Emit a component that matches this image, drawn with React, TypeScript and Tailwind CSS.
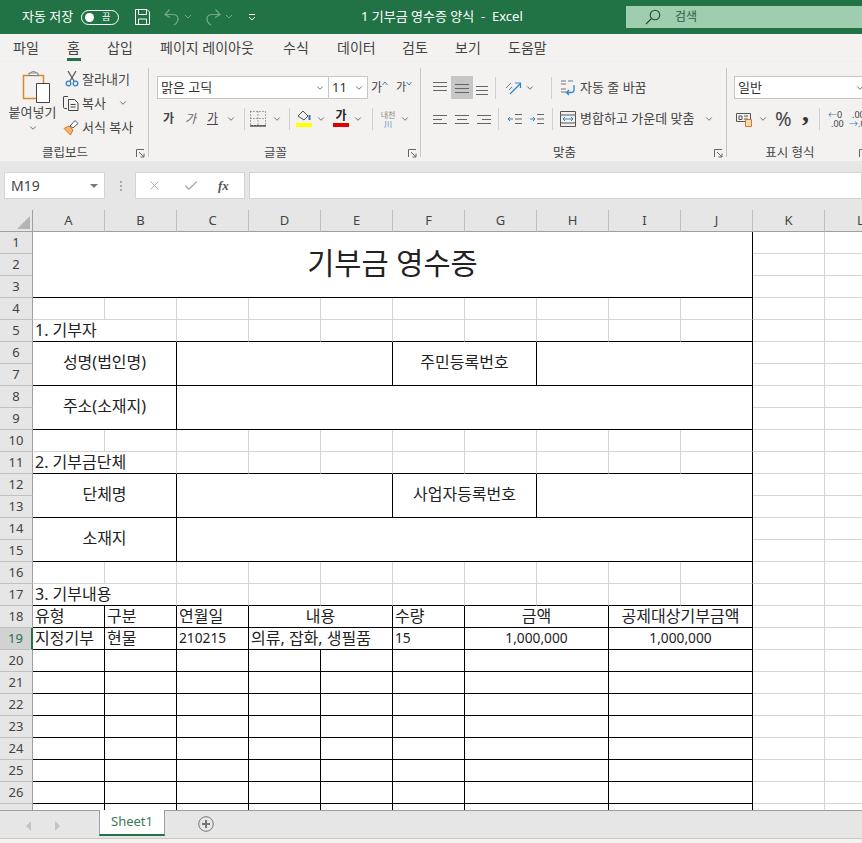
import { Check, ChevronDown, X } from "lucide-react";

type Cell = { span?: number; rows?: number; text?: string; mid?: boolean; r?: boolean; b?: boolean; big?: boolean; num?: boolean };

const font = { fontFamily: '"Noto Sans", "Noto Sans CJK KR", sans-serif' };

const Chev = ({ className = "" }: { className?: string }) => (
  <ChevronDown className={`h-[10px] w-[10px] shrink-0 text-[#555] ${className}`} strokeWidth={2} />
);

const Sep = ({ className = "" }: { className?: string }) => <div className={`h-[22px] w-px shrink-0 bg-[#d2d0ce] ${className}`} />;

const Launcher = () => (
  <svg width="9" height="9" viewBox="0 0 9 9" className="shrink-0 text-[#666]" fill="none" stroke="currentColor">
    <path d="M.5 8V.5H8M3 3l5 5M8 4.5V8H4.5" />
  </svg>
);

// three horizontal strokes used by all the alignment buttons
const Lines = ({ rows, ys = [3, 7, 11] }: { rows: [number, number][]; ys?: number[] }) => (
  <svg width="16" height="14" viewBox="0 0 16 14" className="shrink-0" stroke="#666" fill="none">
    {rows.map((r, i) => (
      <path key={i} d={`M${r[0]} ${ys[i] + 0.5}H${r[1]}`} />
    ))}
  </svg>
);

const Group = ({ w, label, children }: { w: string; label: string; children: React.ReactNode }) => (
  <div className={`flex h-full shrink-0 flex-col border-r border-[#c8c6c4] ${w}`}>
    <div className="flex-1">{children}</div>
    <div className="-mb-[3px] flex h-[14px] items-center pr-[3px] text-[12.5px] leading-none text-[#444]">
      <div className="flex-1 pr-[6px] text-center">{label}</div>
      <Launcher />
    </div>
  </div>
);

const Combo = ({ w, text }: { w: string; text: string }) => (
  <div className={`flex h-[23px] shrink-0 items-center border border-[#c8c6c4] bg-white pl-[3px] text-[13px] text-[#333] ${w}`}>
    {text}
    <Chev className="ml-auto mr-[3px]" />
  </div>
);

const TitleBar = () => (
  <div className="flex h-[34px] shrink-0 items-center bg-[#217346] text-white">
    <span className="ml-[22px] w-[59px] text-[13px]">자동 저장</span>
    <div className="flex h-[15px] w-[38px] items-center rounded-full border border-white pl-[3px] text-[9px]">
      <div className="h-[9px] w-[9px] rounded-full bg-white" />
      <span className="ml-[8px]">끔</span>
    </div>
    <svg width="17" height="18" viewBox="0 0 17 18" fill="none" stroke="white" className="ml-[15px]">
      <path d="M1.5 1.5h11.5l2.5 2.5v12.5h-14zM4.5 1.5v5h8v-5M4.5 16.5v-5.5h8v5.5" />
    </svg>
    <svg width="16" height="18" viewBox="0 0 16 18" fill="none" stroke="#74a88b" strokeWidth="1.2" className="ml-[13px]">
      <path d="M5.5 1.5L1 6.5l5 3M1.5 6.5H9c6 0 6 6 3 9l-2 1.5" />
    </svg>
    <svg width="8" height="6" viewBox="0 0 8 6" fill="none" stroke="#74a88b" className="ml-[4px]"><path d="M1 1l3 3 3-3" /></svg>
    <svg width="16" height="18" viewBox="0 0 16 18" fill="none" stroke="#74a88b" strokeWidth="1.2" className="ml-[13px]">
      <path d="M10.5 1.5l4.5 5-5 3M14.5 6.5H7c-6 0-6 6-3 9l2 1.5" />
    </svg>
    <svg width="8" height="6" viewBox="0 0 8 6" fill="none" stroke="#74a88b" className="ml-[4px]"><path d="M1 1l3 3 3-3" /></svg>
    <svg width="8" height="8" viewBox="0 0 8 8" fill="none" stroke="white" className="ml-[15px]"><path d="M1 1.5h6M1 4l3 3 3-3" /></svg>
    <span className="ml-[105px] w-[265px] whitespace-pre text-[13px]">1 기부금 영수증 양식  -  Excel</span>
    <div className="flex h-[22px] flex-1 items-center bg-[#9fcdb0] text-[12px] text-[#2f5c43]">
      <svg width="16" height="16" viewBox="0 0 16 16" fill="none" stroke="#1f4d35" strokeWidth="1.1" className="ml-[19px]">
        <circle cx="10" cy="6" r="4.8" /><path d="M6.5 9.5L1 15" />
      </svg>
      <span className="ml-[14px]">검색</span>
    </div>
  </div>
);

const tabs = [
  ["파일", "w-[54px]"], ["홈", "w-[40px]"], ["삽입", "w-[53px]"], ["페이지 레이아웃", "w-[123px]"],
  ["수식", "w-[54px]"], ["데이터", "w-[65px]"], ["검토", "w-[53px]"], ["보기", "w-[53px]"], ["도움말", "w-[60px]"],
];

const Tabs = () => (
  <div className="flex h-[28px] shrink-0 items-center bg-[#f3f2f1] pl-[13px] text-[14px] leading-none text-[#444]">
    {tabs.map(([t, w]) => (
      <div key={t} className={`relative shrink-0 ${w}`}>
        {t}
        {t === "홈" && <div className="absolute -bottom-[6px] left-0 h-[3px] w-[14px] bg-[#217346]" />}
      </div>
    ))}
  </div>
);

const Clipboard = () => (
  <Group w="w-[149px]" label="클립보드">
    <div className="flex">
      <div className="flex w-[65px] shrink-0 flex-col items-center">
        <svg width="30" height="32" viewBox="0 0 30 32" fill="none" className="ml-[9px] mt-[3px]">
          <path d="M1.5 4.5h20v23h-20z" fill="#f3f2f1" stroke="#d9882b" strokeWidth="1.5" />
          <path d="M7 4.5h9V2h-9zM9 2c0-2 5-2 5 0" fill="white" stroke="#777" />
          <path d="M14.5 12.5h13v19h-13z" fill="white" stroke="#444" />
        </svg>
        <span className="mt-[1px] text-[13px] leading-[17px] text-[#444]">붙여넣기</span>
        <Chev className="mt-[2px]" />
      </div>
      <div className="-mt-px flex flex-col text-[13px] leading-[24px] text-[#444]">
        <div className="flex items-center">
          <svg width="14" height="16" viewBox="0 0 14 16" fill="none" className="mr-[3px]">
            <path d="M3 0l6 10M11 0L5 10" stroke="#555" strokeWidth="1.2" />
            <circle cx="3.5" cy="12.5" r="2.3" stroke="#2e86c9" strokeWidth="1.3" />
            <circle cx="10.5" cy="12.5" r="2.3" stroke="#2e86c9" strokeWidth="1.3" />
          </svg>
          잘라내기
        </div>
        <div className="-ml-[2px] flex items-center">
          <svg width="16" height="15" viewBox="0 0 16 15" fill="none" stroke="#444" className="mr-[3px]">
            <path d="M5 .5H1a.5.5 0 0 0-.5.5v10c0 1 .5 1.5 1.5 1.5h2M5.5 3.5h6l3.5 3.5v7.5H5.5zM7.5 8.5h5M7.5 11h5" />
          </svg>
          복사
          <Chev className="ml-[12px]" />
        </div>
        <div className="-ml-[2px] flex items-center">
          <svg width="16" height="15" viewBox="0 0 16 15" fill="none" className="mr-[3px]">
            <path d="M1 8.5l5-2.5 4 4-2.5 5z" fill="#f2b36a" stroke="#d9782b" />
            <path d="M7 6l5-5.5 3 3L10 8z" fill="white" stroke="#555" />
          </svg>
          서식 복사
        </div>
      </div>
    </div>
  </Group>
);

const FontGroup = () => (
  <Group w="w-[272px]" label="글꼴">
    <div className="flex items-center pl-[8px] pt-[8px]">
      <Combo w="w-[172px]" text="맑은 고딕" />
      <Combo w="w-[40px] -ml-px" text="11" />
      <span className="ml-[3px] text-[12px] text-[#444]">가</span>
      <svg width="6" height="5" viewBox="0 0 6 5" fill="none" stroke="#3a7fc1" className="mb-[8px]"><path d="M.5 4L3 1l2.5 3" /></svg>
      <span className="ml-[8px] text-[11px] text-[#444]">가</span>
      <svg width="6" height="5" viewBox="0 0 6 5" fill="none" stroke="#3a7fc1" className="mb-[8px]"><path d="M.5 1L3 4l2.5-3" /></svg>
    </div>
    <div className="mt-[8px] flex h-[23px] items-center pl-[14px] text-[12px] leading-none text-[#444]">
      <span className="w-[22px] font-bold">가</span>
      <span className="w-[22px] italic text-[#666]">가</span>
      <span className="w-[19px] underline">가</span>
      <Chev />
      <Sep className="ml-[8px]" />
      <svg width="16" height="16" viewBox="0 0 16 16" fill="none" className="ml-[5px] shrink-0">
        <path d="M.5.5h15v14H.5zM8 .5v14M.5 7.5h15" stroke="#555" strokeDasharray="1 2" />
        <path d="M0 15h16" stroke="#111" />
      </svg>
      <Chev className="ml-[6px]" />
      <Sep className="ml-[7px]" />
      <div className="ml-[6px] flex w-[16px] shrink-0 flex-col items-center">
        <svg width="15" height="12" viewBox="0 0 15 12" fill="none">
          <path d="M1 6l5-5 5 5-4 4z" stroke="#555" /><path d="M12.5 10V5" stroke="#2e74b5" strokeWidth="2" />
        </svg>
        <div className="mt-[1px] h-[4px] w-[16px] bg-[#ffff00]" />
      </div>
      <Chev className="ml-[4px]" />
      <div className="ml-[7px] flex w-[16px] shrink-0 flex-col items-center font-bold text-[#222]">
        <span className="h-[12px] text-[12px]">가</span>
        <div className="mt-[1px] h-[4px] w-[16px] bg-[#e00000]" />
      </div>
      <Chev className="ml-[4px]" />
      <Sep className="ml-[9px]" />
      <div className="ml-[6px] flex w-[18px] shrink-0 flex-col items-center text-[8px] leading-[9px] text-[#888]">
        <span>내천</span><span className="text-[#3a8ac9]">川</span>
      </div>
      <Chev className="ml-[3px]" />
    </div>
  </Group>
);

const AlignGroup = () => (
  <Group w="w-[306px]" label="맞춤">
    <div className="flex h-[31px] items-center pl-[11px] pt-[8px] text-[13px] text-[#444]">
      <Lines rows={[[1, 15], [1, 15], [1, 15]]} ys={[1, 5, 9]} />
      <div className="ml-[3px] flex h-[23px] w-[22px] shrink-0 items-center justify-center bg-[#c6c6c6]">
        <Lines rows={[[1, 15], [1, 15], [1, 15]]} ys={[3, 7, 11]} />
      </div>
      <Lines rows={[[3, 15], [3, 15], [3, 15]]} ys={[5, 9, 13]} />
      <Sep className="ml-[6px]" />
      <svg width="19" height="16" viewBox="0 0 19 16" fill="none" className="ml-[7px] shrink-0">
        <path d="M3 8l5-5M6 10l3-3" stroke="#777" />
        <path d="M7 14L17 4M12 3h5.5v5" stroke="#2e86c9" strokeWidth="1.2" />
      </svg>
      <Chev className="ml-[3px]" />
      <Sep className="ml-[16px]" />
      <svg width="17" height="17" viewBox="0 0 17 17" fill="none" className="ml-[8px] shrink-0">
        <path d="M1 2h5M1 5h5M8 2h5M1 10h5M1 13h5" stroke="#777" />
        <path d="M14 6v5c0 2-1 2.5-3 2.5H7M9 11l-2.5 2.5L9 16" stroke="#2e86c9" strokeWidth="1.3" />
      </svg>
      <span className="ml-[3px]">자동 줄 바꿈</span>
    </div>
    <div className="mt-[8px] flex h-[23px] items-center pl-[11px] text-[13px] text-[#444]">
      <Lines rows={[[1, 15], [1, 10], [1, 15]]} />
      <span className="w-[6px]" />
      <Lines rows={[[1, 15], [3, 13], [1, 15]]} />
      <span className="w-[6px]" />
      <Lines rows={[[1, 15], [6, 15], [1, 15]]} />
      <Sep className="ml-[6px]" />
      <svg width="15" height="12" viewBox="0 0 15 12" fill="none" className="ml-[8px] shrink-0">
        <path d="M8 1.5h7M8 6h7M8 10.5h7" stroke="#666" /><path d="M6 6H1M3 4L1 6l2 2" stroke="#2e86c9" />
      </svg>
      <svg width="15" height="12" viewBox="0 0 15 12" fill="none" className="ml-[7px] shrink-0">
        <path d="M8 1.5h7M8 6h7M8 10.5h7" stroke="#666" /><path d="M1 6h5M4 4l2 2-2 2" stroke="#2e86c9" />
      </svg>
      <Sep className="ml-[8px]" />
      <svg width="16" height="16" viewBox="0 0 16 16" fill="none" className="ml-[7px] shrink-0">
        <path d="M.5.5h15v15H.5zM.5 4h15M.5 12h15" stroke="#555" />
        <path d="M3 8h10M5 6L3 8l2 2M11 6l2 2-2 2" stroke="#2e86c9" />
      </svg>
      <span className="ml-[4px] w-[124px] shrink-0">병합하고 가운데 맞춤</span>
      <Chev />
    </div>
  </Group>
);

const NumberGroup = () => (
  <Group w="w-[145px]" label="표시 형식">
    <div className="pl-[7px] pt-[8px]">
      <Combo w="w-[135px]" text="일반" />
    </div>
    <div className="mt-[8px] flex h-[23px] items-center pl-[9px] text-[#444]">
      <svg width="17" height="16" viewBox="0 0 17 16" fill="none" className="shrink-0">
        <path d="M.5 2.5h14v8H.5z" stroke="#555" /><path d="M3 5h3v3.5H3zM8 5h4M8 8h4" stroke="#555" />
        <path d="M9.5 8.5h6v7h-6z" fill="#f7d9b0" stroke="#d9782b" />
      </svg>
      <Chev className="ml-[5px]" />
      <span className="ml-[7px] w-[27px] shrink-0 text-[20px] leading-none text-[#444]">%</span>
      <span className="-mt-[14px] w-[17px] shrink-0 text-[28px] font-bold leading-none text-[#333] [font-family:'Liberation_Serif',serif]">,</span>
      <Sep />
      <div className="ml-[7px] flex w-[20px] shrink-0 flex-col text-[9px] leading-[9px]">
        <span className="pl-[1px]"><span className="text-[#2e86c9]">←</span>0</span>
        <span className="pl-[4px]">.00</span>
      </div>
      <div className="ml-[2px] flex w-[20px] shrink-0 flex-col whitespace-nowrap text-[9px] leading-[9px]">
        <span className="pl-[3px]">.00</span>
        <span><span className="text-[#2e86c9]">→</span>.0</span>
      </div>
    </div>
  </Group>
);

const Ribbon = () => (
  <div className="flex h-[99px] shrink-0 bg-[#f3f2f1] pb-[4px] pt-[6px] shadow-[0_1px_2px_rgba(0,0,0,0.18)]">
    <Clipboard />
    <FontGroup />
    <AlignGroup />
    <NumberGroup />
  </div>
);

const FormulaBar = () => (
  <div className="flex h-[49px] shrink-0 items-start bg-[#e6e6e6] pl-[4px] pt-[11px]">
    <div className="flex h-[27px] w-[101px] shrink-0 items-center border border-[#d4d4d4] bg-white pl-[6px] text-[14px] text-[#444]">
      M19
      <div className="ml-auto mr-[6px] h-0 w-0 border-x-[4px] border-t-[4px] border-x-transparent border-t-[#777]" />
    </div>
    <div className="ml-[15px] mt-[9px] flex w-[3px] flex-col gap-[2px]">
      <div className="h-[2px] w-[2px] bg-[#aaa]" /><div className="h-[2px] w-[2px] bg-[#aaa]" /><div className="h-[2px] w-[2px] bg-[#aaa]" />
    </div>
    <div className="ml-[12px] flex h-[27px] w-[110px] shrink-0 items-center border border-[#d4d4d4] bg-white pl-[11px]">
      <X className="h-[15px] w-[15px] text-[#aaa]" strokeWidth={1.5} />
      <Check className="ml-[21px] h-[16px] w-[16px] text-[#aaa]" strokeWidth={2} />
      <span className="ml-[19px] text-[13px] font-bold italic text-[#555] [font-family:'Liberation_Serif',serif]">fx</span>
    </div>
    <div className="ml-[4px] h-[27px] flex-1 border border-[#d4d4d4] bg-white" />
  </div>
);

// spare rows: grey grid with the black right edge of column J
const spare = (): Cell[] => [{}, {}, {}, {}, {}, {}, {}, {}, {}, { r: true }];

const section = (text: string): Cell[] => [
  { span: 2, text, b: true },
  ...Array.from({ length: 7 }, () => ({ b: true })),
  { r: true, b: true },
];

const black = (span: number, rows: number, text?: string): Cell => ({ span, rows, text, mid: true, r: true, b: true });

const line = (c: Cell[]) => c.map((x) => ({ ...x, r: true, b: true }));

const blank = () => line([{}, {}, {}, {}, {}, {}, { span: 2 }, { span: 2 }]);

const sheet: Cell[][] = [
  [{ span: 10, rows: 3, text: "기부금 영수증", mid: true, r: true, b: true, big: true }],
  [],
  [],
  spare(),
  section("1. 기부자"),
  [black(2, 2, "성명(법인명)"), black(3, 2), black(2, 2, "주민등록번호"), black(3, 2)],
  [],
  [black(2, 2, "주소(소재지)"), black(8, 2)],
  [],
  spare(),
  section("2. 기부금단체"),
  [black(2, 2, "단체명"), black(3, 2), black(2, 2, "사업자등록번호"), black(3, 2)],
  [],
  [black(2, 2, "소재지"), black(8, 2)],
  [],
  spare(),
  section("3. 기부내용"),
  line([
    { text: "유형" },
    { text: "구분" },
    { text: "연월일" },
    { span: 2, text: "내용", mid: true },
    { text: "수량" },
    { span: 2, text: "금액", mid: true },
    { span: 2, text: "공제대상기부금액", mid: true },
  ]),
  line([
    { text: "지정기부" },
    { text: "현물" },
    { text: "210215", num: true },
    { span: 2, text: "의류, 잡화, 생필품" },
    { text: "15", num: true },
    { span: 2, text: "1,000,000", mid: true, num: true },
    { span: 2, text: "1,000,000", mid: true, num: true },
  ]),
  ...Array.from({ length: 8 }, blank),
];

const columns = ["A", "B", "C", "D", "E", "F", "G", "H", "I", "J", "K", "L"];

const Grid = () => (
  <div className="min-h-0 flex-1 overflow-hidden bg-white">
    <table className="w-[897px] table-fixed border-separate border-spacing-0 leading-none text-[#222]">
      <colgroup>
        <col className="w-[33px]" />
        {columns.map((c) => <col key={c} className="w-[72px]" />)}
      </colgroup>
      <thead>
        <tr className="h-[22px]">
          <th className="border-b border-r border-[#9f9f9f] bg-[#e6e6e6] p-0 align-bottom">
            <div className="mb-[2px] ml-auto mr-[2px] h-0 w-0 border-b-[13px] border-l-[13px] border-b-[#b4b4b4] border-l-transparent" />
          </th>
          {columns.map((c) => (
            <th key={c} className="border-b border-r border-b-[#9f9f9f] border-r-[#c0c0c0] bg-[#e6e6e6] p-0 text-center text-[13px] font-normal text-[#444]">{c}</th>
          ))}
        </tr>
      </thead>
      <tbody>
        {sheet.map((cells, i) => (
          <tr key={i} className="h-[22px]">
            <td className={`border-b border-[#c0c0c0] p-0 text-center text-[13px] ${i === 18 ? "border-r-2 border-r-[#217346] bg-[#d2d2d2] text-[#217346]" : "border-r border-r-[#9f9f9f] bg-[#e6e6e6] text-[#444]"}`}>{i + 1}</td>
            {cells.map((c, j) => (
              <td
                key={j}
                colSpan={c.span}
                rowSpan={c.rows}
                className={`overflow-hidden whitespace-nowrap border-b border-r p-0 align-middle ${c.b ? "border-b-black" : "border-b-[#d4d4d4]"} ${c.r ? "border-r-black" : "border-r-[#d4d4d4]"} ${c.mid ? "text-center" : "pl-[2px]"} ${c.rows ? "pb-[4px]" : "pb-[2px]"} ${c.big ? "text-[29.5px]" : c.num ? "text-[13.75px]" : "text-[16px]"}`}
              >
                {c.text}
              </td>
            ))}
            <td className="border-b border-r border-[#d4d4d4] p-0" />
            <td className="border-b border-r border-[#d4d4d4] p-0" />
          </tr>
        ))}
      </tbody>
    </table>
  </div>
);

const SheetTabs = () => (
  <>
    <div className="flex h-[28px] shrink-0 items-start border-t border-[#9f9f9f] bg-[#e6e6e6]">
      <div className="ml-[26px] mt-[10px] h-0 w-0 border-y-[5px] border-r-[5px] border-y-transparent border-r-[#c4c4c4]" />
      <div className="ml-[24px] mt-[10px] h-0 w-0 border-y-[5px] border-l-[5px] border-y-transparent border-l-[#c4c4c4]" />
      <div className="-mt-px ml-[39px] flex h-[26px] w-[66px] items-center justify-center border-x border-b-2 border-x-[#9f9f9f] border-b-[#217346] bg-white text-[13px] text-[#3b7a57]">Sheet1</div>
      <svg width="16" height="16" viewBox="0 0 16 16" fill="none" stroke="#777" className="ml-[33px] mt-[5px]">
        <circle cx="8" cy="8" r="7.3" /><path d="M8 4v8M4 8h8" strokeWidth="2" />
      </svg>
    </div>
    <div className="h-[5px] shrink-0 border-t border-[#c8c8c8] bg-[#f3f2f1]" />
  </>
);

export default function App() {
  return (
    <div className="flex h-[843px] w-[862px] flex-col overflow-hidden" style={font}>
      <TitleBar />
      <Tabs />
      <Ribbon />
      <FormulaBar />
      <Grid />
      <SheetTabs />
    </div>
  );
}
